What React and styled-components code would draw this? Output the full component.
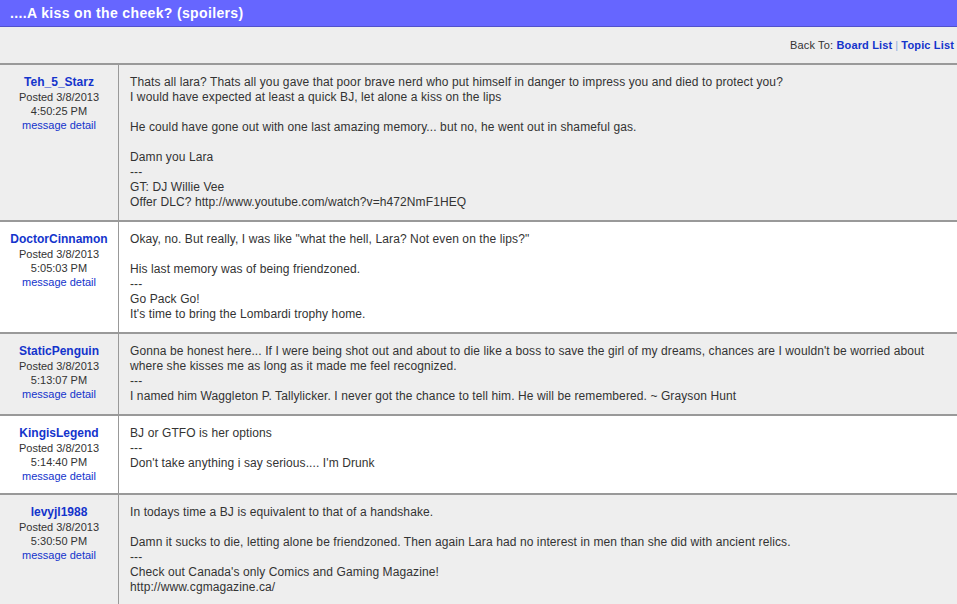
import React from "react";
import styled, { createGlobalStyle } from "styled-components";

const Global = createGlobalStyle`
  html, body { margin: 0; padding: 0; background: #eeeeee; }
  body { font-family: "Liberation Sans", Arial, sans-serif; color: #333333; }
  * { box-sizing: border-box; }
`;

const Page = styled.div`
  width: 957px;
  min-height: 604px;
  background: #eeeeee;
  overflow: hidden;
`;

const TitleBar = styled.div`
  height: 27px;
  background: #6666ff;
  border-bottom: 1px solid #5151cc;
  display: flex;
  align-items: center;
  padding: 0 10px;
`;

const Title = styled.h1`
  margin: 0;
  font-size: 14px;
  font-weight: bold;
  letter-spacing: 0.35px;
  color: #ffffff;
`;

const NavBar = styled.div`
  height: 36px;
  display: flex;
  align-items: center;
  justify-content: flex-end;
  padding: 0 3px 0 0;
  font-size: 11px;
  letter-spacing: 0.15px;
  color: #333333;
`;

const NavLink = styled.a`
  color: #1434cc;
  font-weight: bold;
  text-decoration: none;
`;

const Sep = styled.span`
  color: #88aadd;
  margin: 0 3px;
`;

const Board = styled.div`
  border-top: 2px solid #999999;
`;

const Row = styled.div`
  display: grid;
  grid-template-columns: 119px 1fr;
  background: ${(p) => (p.$alt ? "#ffffff" : "#eeeeee")};
  border-bottom: 2px solid #999999;
`;

const Author = styled.div`
  border-right: 1px solid #999999;
  padding: 10px 0;
  text-align: center;
  display: flex;
  flex-direction: column;
  align-items: center;
`;

const UserName = styled.a`
  color: #1434cc;
  font-weight: bold;
  font-size: 12px;
  line-height: 15px;
  text-decoration: none;
`;

const Meta = styled.span`
  font-size: 11px;
  line-height: 14px;
  color: #333333;
`;

const Detail = styled.a`
  font-size: 11px;
  line-height: 14px;
  color: #1434cc;
  text-decoration: none;
`;

const Message = styled.div`
  padding: 10px 10px 10px 11px;
  font-size: 12px;
  line-height: 15px;
  letter-spacing: 0.1px;
  color: #333333;
`;

const Line = styled.div`
  min-height: 15px;
  white-space: pre-wrap;
`;

const posts = [
  {
    user: "Teh_5_Starz",
    date: "3/8/2013",
    time: "4:50:25 PM",
    lines: [
      "Thats all lara? Thats all you gave that poor brave nerd who put himself in danger to impress you and died to protect you?",
      "I would have expected at least a quick BJ, let alone a kiss on the lips",
      "",
      "He could have gone out with one last amazing memory... but no, he went out in shameful gas.",
      "",
      "Damn you Lara",
      "---",
      "GT: DJ Willie Vee",
      "Offer DLC? http://www.youtube.com/watch?v=h472NmF1HEQ",
    ],
  },
  {
    user: "DoctorCinnamon",
    date: "3/8/2013",
    time: "5:05:03 PM",
    lines: [
      'Okay, no. But really, I was like "what the hell, Lara? Not even on the lips?"',
      "",
      "His last memory was of being friendzoned.",
      "---",
      "Go Pack Go!",
      "It's time to bring the Lombardi trophy home.",
    ],
  },
  {
    user: "StaticPenguin",
    date: "3/8/2013",
    time: "5:13:07 PM",
    lines: [
      "Gonna be honest here... If I were being shot out and about to die like a boss to save the girl of my dreams, chances are I wouldn't be worried about where she kisses me as long as it made me feel recognized.",
      "---",
      "I named him Waggleton P. Tallylicker. I never got the chance to tell him. He will be remembered. ~ Grayson Hunt",
    ],
  },
  {
    user: "KingisLegend",
    date: "3/8/2013",
    time: "5:14:40 PM",
    lines: ["BJ or GTFO is her options", "---", "Don't take anything i say serious.... I'm Drunk"],
  },
  {
    user: "levyjl1988",
    date: "3/8/2013",
    time: "5:30:50 PM",
    lines: [
      "In todays time a BJ is equivalent to that of a handshake.",
      "",
      "Damn it sucks to die, letting alone be friendzoned. Then again Lara had no interest in men than she did with ancient relics.",
      "---",
      "Check out Canada's only Comics and Gaming Magazine!",
      "http://www.cgmagazine.ca/",
    ],
  },
];

export default function App() {
  return (
    <Page>
      <Global />
      <TitleBar>
        <Title>....A kiss on the cheek? (spoilers)</Title>
      </TitleBar>
      <NavBar>
        Back To:&nbsp;<NavLink href="#">Board List</NavLink>
        <Sep>|</Sep>
        <NavLink href="#">Topic List</NavLink>
      </NavBar>
      <Board>
        {posts.map((p, i) => (
          <Row key={p.user} $alt={i % 2 === 1}>
            <Author>
              <UserName href="#">{p.user}</UserName>
              <Meta>Posted {p.date}</Meta>
              <Meta>{p.time}</Meta>
              <Detail href="#">message detail</Detail>
            </Author>
            <Message>
              {p.lines.map((l, j) => (
                <Line key={j}>{l}</Line>
              ))}
            </Message>
          </Row>
        ))}
      </Board>
    </Page>
  );
}
